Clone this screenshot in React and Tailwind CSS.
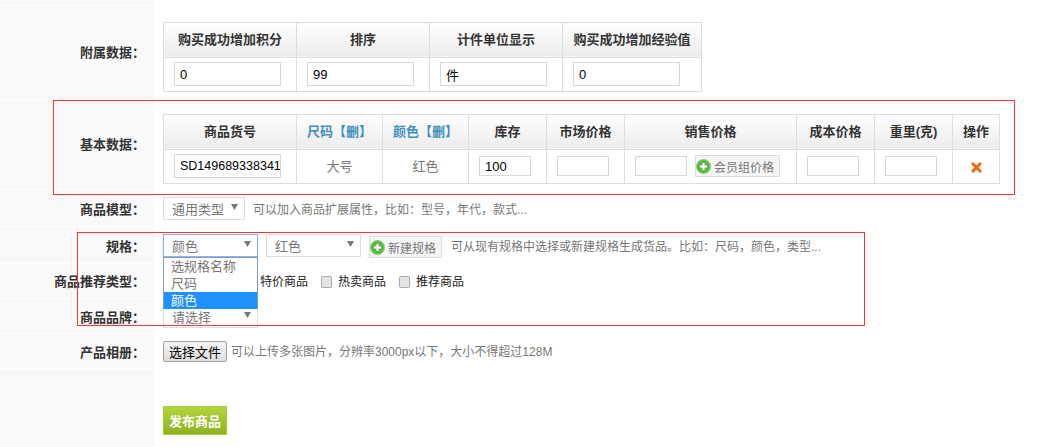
import React from 'react';

const fontStack = "font-['Liberation_Sans','Noto_Sans_CJK_SC',sans-serif]";

function Row({ label, height, top = '', labelTop = '', children }) {
  return (
    <div className={`flex ${height} border-b border-white`}>
      <div className={`w-[153px] shrink-0 bg-[#f9f9f9] flex items-center justify-end pr-[8px] text-[13px] font-bold text-[#333] ${top} ${labelTop}`}>
        {label}
      </div>
      <div className={`flex-1 pl-[10px] flex items-center min-w-0 ${top}`}>{children}</div>
    </div>
  );
}

function Arrow() {
  return (
    <svg width="7" height="6" viewBox="0 0 7 6" className="shrink-0 mb-[2px]">
      <path d="M0 0h7L3.5 6z" fill="#777" />
    </svg>
  );
}

function Select({ text, width, focus }) {
  return (
    <div
      className={`${width} h-[23px] flex items-center justify-between pl-[8px] pr-[6px] text-[13px] text-[#777] border ${
        focus ? 'border-[#8fb4ee] shadow-[0_0_1px_#8fb4ee]' : 'border-[#ddd]'
      }`}
    >
      <span className="pt-[4px]">{text}</span>
      <Arrow />
    </div>
  );
}

function PlusIcon() {
  return (
    <svg width="15" height="15" viewBox="0 0 15 15" className="shrink-0">
      <circle cx="7.5" cy="7.5" r="7" fill="#5fb548" stroke="#8ccf78" />
      <path d="M7.5 4v7M4 7.5h7" stroke="#fff" strokeWidth="2" />
    </svg>
  );
}

function IconButton({ text, width }) {
  return (
    <button className={`${width} h-[22px] flex items-center gap-[3px] whitespace-nowrap bg-[#f5f5f5] border border-[#ddd] text-[12px] text-[#777]`}>
      <PlusIcon />
      <span className="pt-[3px]">{text}</span>
    </button>
  );
}

function CloseIcon() {
  return (
    <svg width="11" height="11" viewBox="0 0 11 11" className="mx-auto block">
      <path d="M2 2l7 7M9 2l-7 7" stroke="#ee6a10" strokeWidth="3" strokeLinecap="square" />
    </svg>
  );
}

function Field({ value, className = 'w-[52px] h-[20px] px-[5px] text-[13px]' }) {
  return (
    <input
      readOnly
      defaultValue={value}
      className={`${className} border border-[#d8d8d8] text-black outline-none block`}
    />
  );
}

const wideField = 'w-[107px] h-[24px] px-[5px] text-[13px]';

function Th({ children, blue, width }) {
  return (
    <th
      className={`${width} h-[35px] p-0 border border-[#ddd] bg-linear-to-b from-white to-[#ececec] text-[13px] font-bold text-center ${
        blue ? 'text-[#3f8fbd]' : 'text-[#333]'
      }`}
    >
      {children}
    </th>
  );
}

function Td({ children }) {
  return <td className="h-[34px] p-0 pt-[2px] border border-[#ddd] text-center text-[13px] text-[#777]">{children}</td>;
}

function FieldTd({ children }) {
  return <td className="h-[34px] p-0 pl-[10px] border border-[#ddd]">{children}</td>;
}

function Check({ label }) {
  return (
    <label className="flex items-center gap-[6px] text-[12px] text-[#222]">
      <input type="checkbox" className="appearance-none w-[11px] h-[12px] rounded-[2px] bg-[#e4e4e4] border border-[#aaa]" />
      {label}
    </label>
  );
}

export default function App() {
  return (
    <div className={`relative w-[1049px] h-[447px] overflow-hidden bg-white ${fontStack}`}>
      <div className="h-[6px] w-[153px] bg-[#f9f9f9] border-b border-white" />

      <Row label="附属数据：" height="h-[94px]">
        <div className="pt-[8px]">
          <table className="table-fixed border-collapse w-[538px]">
            <thead>
              <tr>
                <Th width="w-[133px]">购买成功增加积分</Th>
                <Th width="w-[133px]">排序</Th>
                <Th width="w-[133px]">计件单位显示</Th>
                <Th width="w-[139px]">购买成功增加经验值</Th>
              </tr>
            </thead>
            <tbody>
              <tr>
                <FieldTd><Field value="0" className={wideField} /></FieldTd>
                <FieldTd><Field value="99" className={wideField} /></FieldTd>
                <FieldTd><Field value="件" className={wideField} /></FieldTd>
                <FieldTd><Field value="0" className={wideField} /></FieldTd>
              </tr>
            </tbody>
          </table>
        </div>
      </Row>

      <Row label="基本数据：" height="h-[90px]">
        <div className="pt-[8px]">
          <table className="table-fixed border-collapse w-[836px]">
            <thead>
              <tr>
                <Th width="w-[133px]">商品货号</Th>
                <Th width="w-[86px]" blue>尺码【删】</Th>
                <Th width="w-[86px]" blue>颜色【删】</Th>
                <Th width="w-[78px]">库存</Th>
                <Th width="w-[78px]">市场价格</Th>
                <Th width="w-[172px]">销售价格</Th>
                <Th width="w-[78px]">成本价格</Th>
                <Th width="w-[78px]">重里(克)</Th>
                <Th width="w-[47px]">操作</Th>
              </tr>
            </thead>
            <tbody>
              <tr>
                <FieldTd><Field value="SD149689338341" className="w-[107px] h-[24px] pl-[5px] text-[12.5px]" /></FieldTd>
                <Td>大号</Td>
                <Td>红色</Td>
                <FieldTd><Field value="100" /></FieldTd>
                <FieldTd><Field /></FieldTd>
                <FieldTd>
                  <div className="flex items-center gap-[8px]">
                    <Field />
                    <IconButton text="会员组价格" width="w-[85px]" />
                  </div>
                </FieldTd>
                <FieldTd><Field /></FieldTd>
                <FieldTd><Field /></FieldTd>
                <Td><CloseIcon /></Td>
              </tr>
            </tbody>
          </table>
        </div>
      </Row>

      <Row label="商品模型：" height="h-[37px]" labelTop="pt-[4px]">
        <Select text="通用类型" width="w-[82px]" />
        <span className="ml-[8px] pt-[4px] text-[12px] text-[#777]">可以加入商品扩展属性，比如：型号，年代，款式...</span>
      </Row>

      <Row label="规格：" height="h-[37px]" labelTop="pt-[4px]">
        <Select text="颜色" width="w-[95px]" focus />
        <div className="ml-[8px]"><Select text="红色" width="w-[95px]" /></div>
        <div className="ml-[8px] mt-[4px]"><IconButton text="新建规格" width="w-[73px]" /></div>
        <span className="ml-[9px] pt-[4px] text-[12px] text-[#777]">可从现有规格中选择或新建规格生成货品。比如：尺码，颜色，类型...</span>
      </Row>

      <Row label="商品推荐类型：" height="h-[35px]" top="pt-[2px]">
        <div className="flex items-center pl-[97px] gap-[13px]">
          <span className="text-[12px] text-[#222]">特价商品</span>
          <Check label="热卖商品" />
          <Check label="推荐商品" />
        </div>
      </Row>

      <Row label="商品品牌：" height="h-[35px]" labelTop="pt-[4px]">
        <Select text="请选择" width="w-[95px]" />
      </Row>

      <Row label="产品相册：" height="h-[35px]" labelTop="pt-[4px]">
        <button className="w-[64px] h-[21px] pt-[1px] border border-[#a0a0a0] rounded-[2px] bg-linear-to-b from-[#f6f6f6] to-[#dedede] text-[13px] text-black">
          选择文件
        </button>
        <span className="ml-[4px] pt-[2px] text-[12px] text-[#777]">可以上传多张图片，分辨率3000px以下，大小不得超过128M</span>
      </Row>

      <div className="flex h-[78px]">
        <div className="w-[153px] bg-[#f9f9f9]" />
        <div className="pl-[10px] pt-[37px]">
          <button className="w-[64px] h-[29px] pt-[2px] border border-[#a8cc3c] bg-linear-to-b from-[#b2d63e] to-[#8fb121] text-[13px] font-bold text-white">
            发布商品
          </button>
        </div>
      </div>

      {/* open select list */}
      <div className="absolute left-[163px] top-[257px] w-[95px] h-[52px] bg-white border border-[#7f9db9] text-[13px] text-[#777] leading-[17px]">
        <div className="pl-[7px]">选规格名称</div>
        <div className="pl-[7px]">尺码</div>
        <div className="pl-[7px] bg-[#1e90ff] text-white">颜色</div>
      </div>

      {/* annotation boxes */}
      <div className="absolute left-[53px] top-[100px] w-[962px] h-[95px] border border-[#ff3333] pointer-events-none" />
      <div className="absolute left-[77px] top-[232px] w-[788px] h-[94px] border border-[#ff3333] pointer-events-none" />
    </div>
  );
}
